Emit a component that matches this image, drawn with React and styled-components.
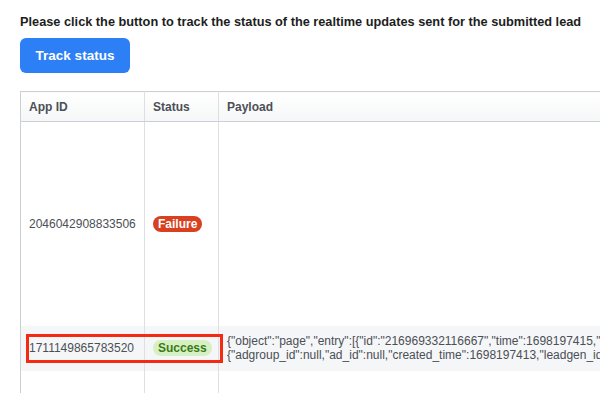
import React from "react";
import styled, { createGlobalStyle } from "styled-components";

const Global = createGlobalStyle`
  html, body { margin: 0; padding: 0; background: #fff; overflow: hidden; }
  body { font-family: "Liberation Sans", Arial, Helvetica, sans-serif; }
`;

const Page = styled.div`
  padding: 14px 0 0 20px;
  width: 900px;
`;

const Heading = styled.div`
  font-size: 12.75px;
  font-weight: bold;
  color: #1c1e21;
  line-height: 15px;
  white-space: nowrap;
`;

const Button = styled.button`
  margin-top: 9px;
  width: 110px;
  height: 35px;
  border: none;
  border-radius: 6px;
  background: #2d7ff5;
  color: #fff;
  font-family: inherit;
  font-size: 13.5px;
  font-weight: bold;
  padding: 0;
`;

const Table = styled.table`
  margin-top: 18px;
  border-collapse: collapse;
  border: 1px solid #ccd0d5;
  width: 880px;
  table-layout: fixed;
  font-size: 12px;
  color: #4b4f56;
`;

const Th = styled.th`
  height: 29px;
  padding: 0 8px;
  text-align: left;
  font-weight: bold;
  font-size: 12px;
  color: #4b4f56;
  background: linear-gradient(#ffffff, #f5f6f7);
  border-right: 1px solid #dddfe2;
  border-bottom: 1px solid #ccd0d5;
  width: ${(p) => p.$w || "auto"};
`;

const Row = styled.tr`
  background: ${(p) => (p.$shade ? "#f5f6f7" : "#fff")};
  height: ${(p) => p.$h}px;
`;

const Td = styled.td`
  padding: 4px 8px;
  border-right: 1px solid #dddfe2;
  vertical-align: middle;
  white-space: nowrap;
  overflow: ${(p) => (p.$clip ? "hidden" : "visible")};
  line-height: 14px;
  position: ${(p) => (p.$rel ? "relative" : "static")};
`;

const Badge = styled.span`
  display: inline-block;
  height: 16px;
  line-height: 16px;
  padding: 0 5px;
  border-radius: 9px;
  font-weight: bold;
  font-size: 12px;
  background: ${(p) => (p.$ok ? "#d7f0c3" : "#d8401f")};
  color: ${(p) => (p.$ok ? "#3a7a16" : "#fff")};
`;

const Highlight = styled.div`
  position: absolute;
  z-index: 2;
  left: 5px;
  top: 8px;
  width: 197px;
  height: 29px;
  box-sizing: border-box;
  border: 3px solid #f52a12;
  pointer-events: none;
`;

export default function App() {
  return (
    <>
      <Global />
      <Page>
        <Heading>
          Please click the button to track the status of the realtime updates sent for the submitted lead
        </Heading>
        <Button>Track status</Button>
        <Table>
          <thead>
            <tr>
              <Th $w="107px">App ID</Th>
              <Th $w="57px">Status</Th>
              <Th>Payload</Th>
            </tr>
          </thead>
          <tbody>
            <Row $h={204}>
              <Td>2046042908833506</Td>
              <Td>
                <Badge>Failure</Badge>
              </Td>
              <Td $clip></Td>
            </Row>
            <Row $h={45} $shade>
              <Td $rel>
                1711149865783520
                <Highlight />
              </Td>
              <Td>
                <Badge $ok>Success</Badge>
              </Td>
              <Td $clip>
                {'{"object":"page","entry":[{"id":"216969332116667","time":1698197415,"changes":[{"value":'}
                <br />
                {'{"adgroup_id":null,"ad_id":null,"created_time":1698197413,"leadgen_id":"1234567890"}'}
              </Td>
            </Row>
            <Row $h={40}>
              <Td></Td>
              <Td></Td>
              <Td $clip></Td>
            </Row>
          </tbody>
        </Table>
      </Page>
    </>
  );
}
